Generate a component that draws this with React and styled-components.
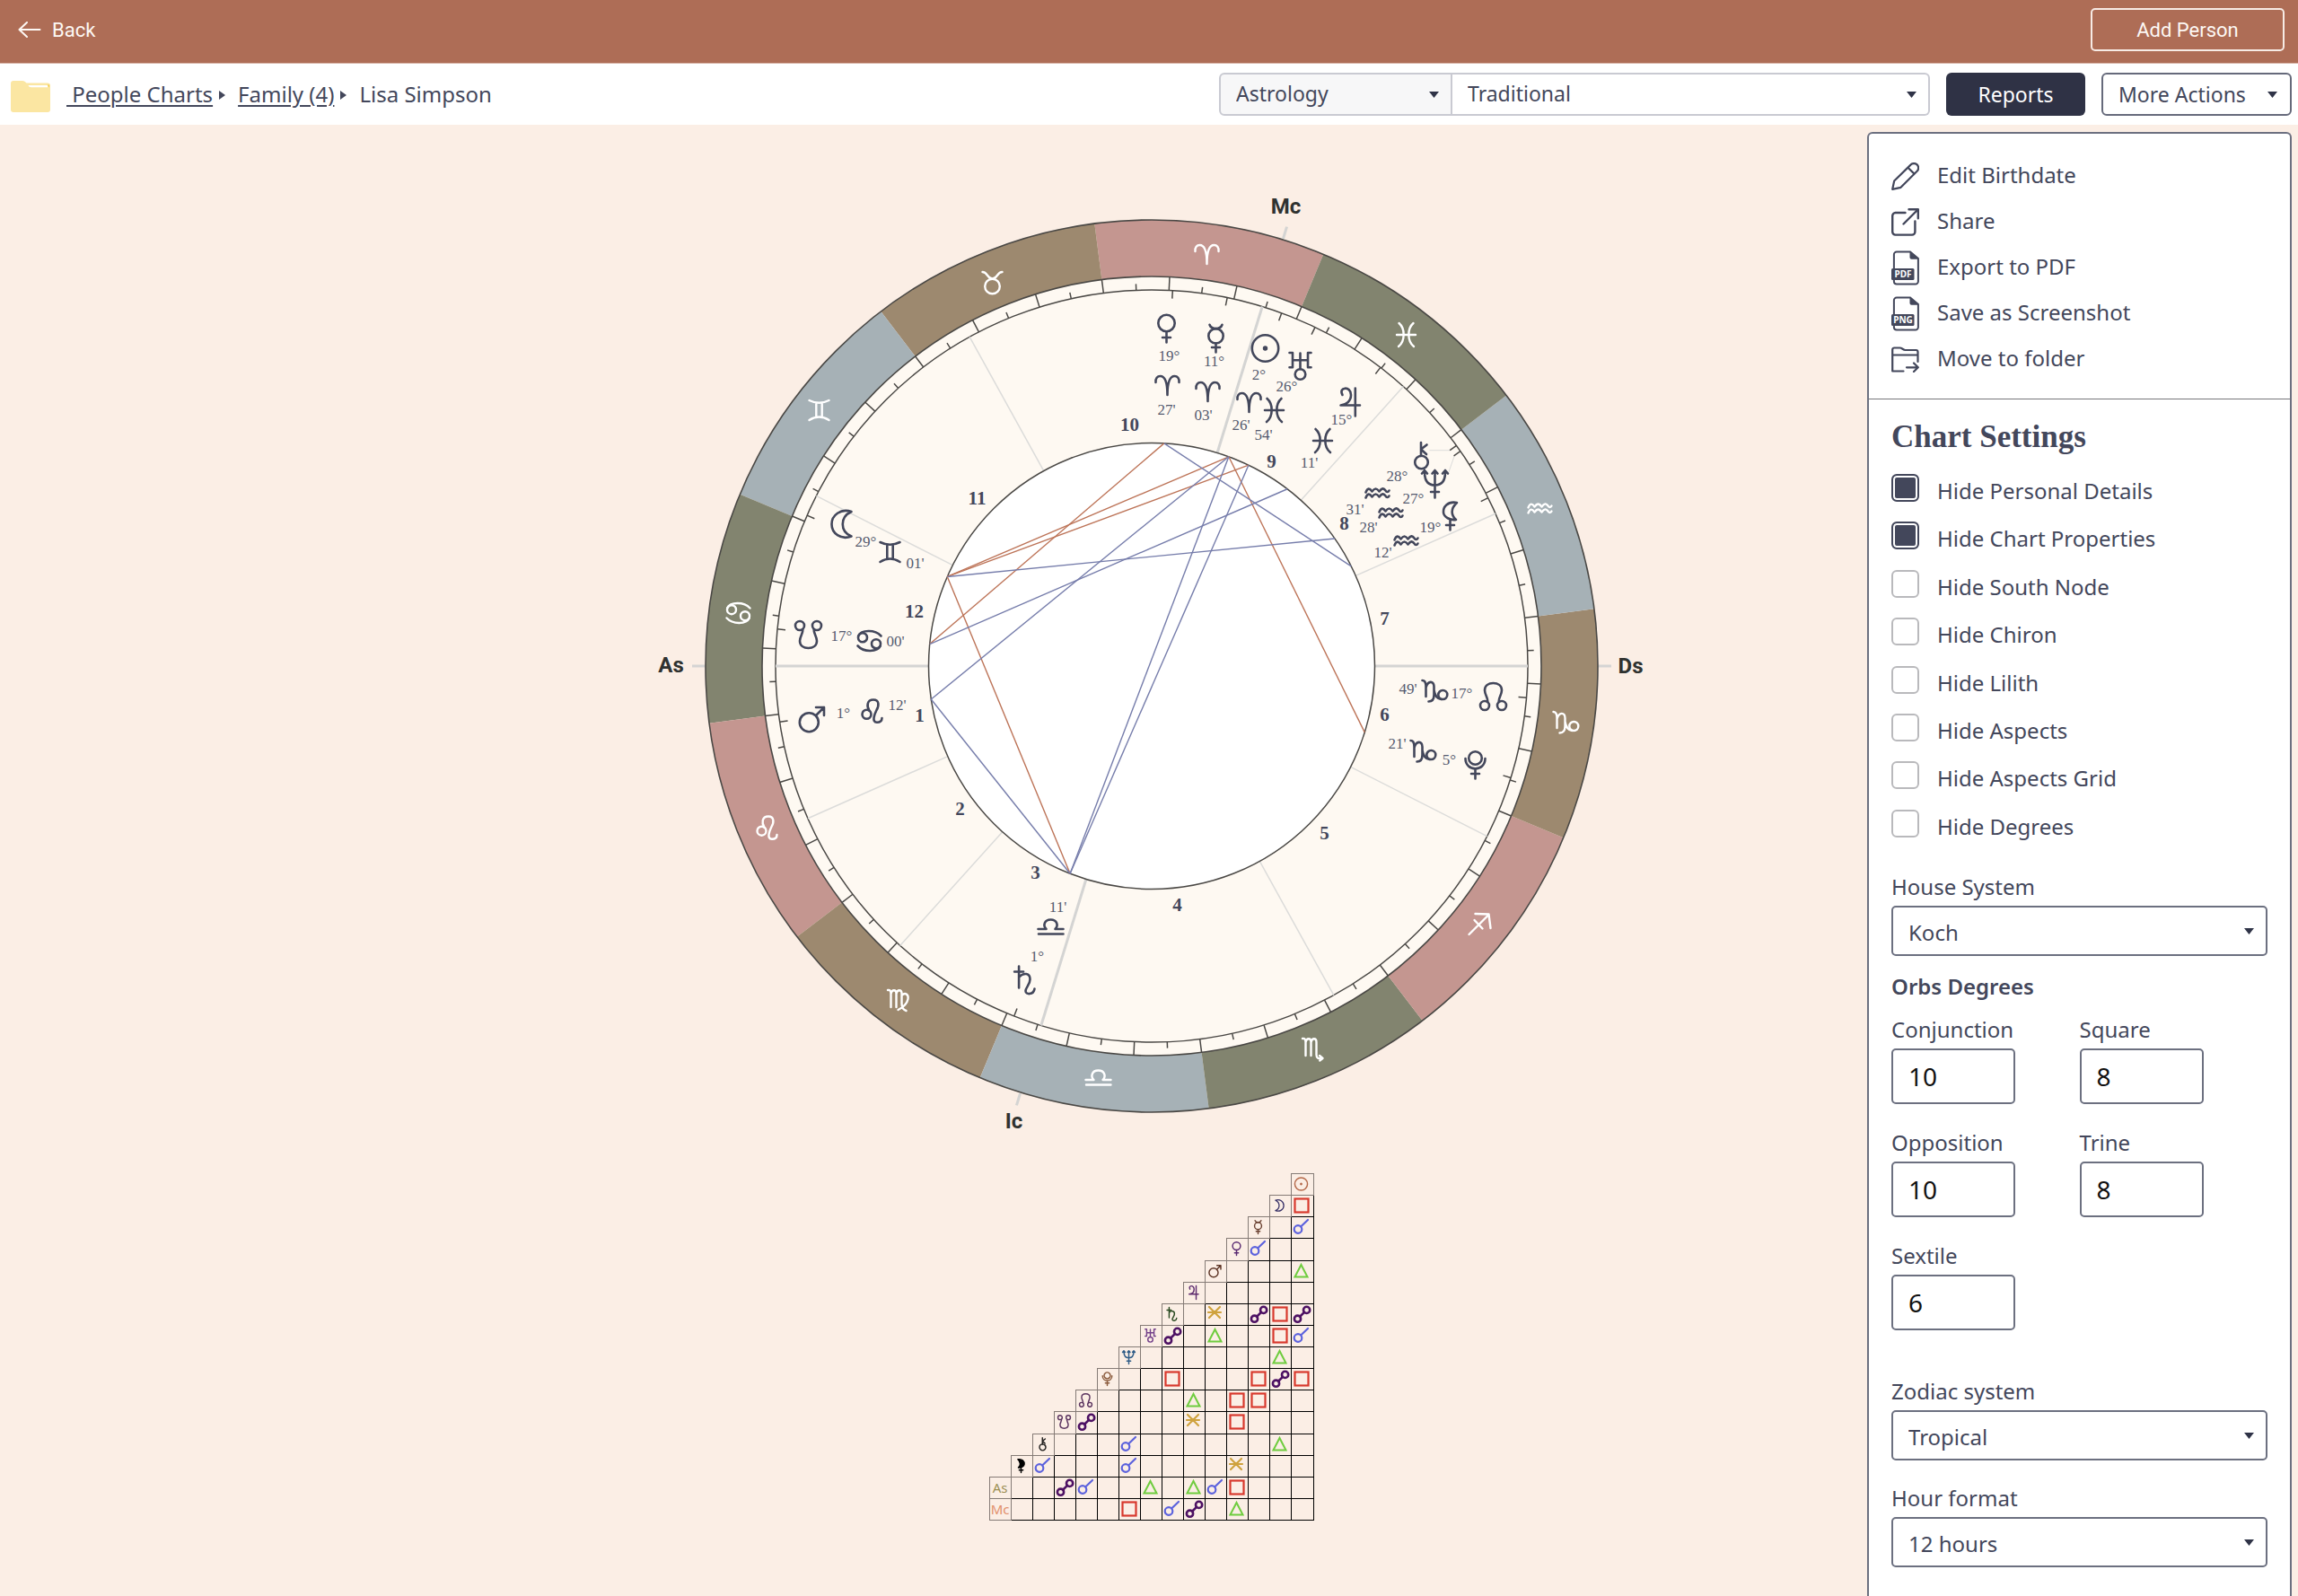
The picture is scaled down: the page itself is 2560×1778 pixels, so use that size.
import React from 'react';
import styled, { createGlobalStyle } from 'styled-components';

const ink = '#43475b';
const sans = '"Noto Sans", "Open Sans", sans-serif';
const serif = '"Liberation Serif", "Times New Roman", serif';

const GlobalStyle = createGlobalStyle`
  *, *::before, *::after { box-sizing: border-box; }
  body {
    margin: 0;
    background: #fbeee5;
    color: ${ink};
    font-family: ${sans};
    font-size: 24px;
  }
`;

const Page = styled.div`
  display: flex;
  flex-direction: column;
  height: 100vh;
  overflow: hidden;
`;

/* ---------- top bar ---------- */

const TopBar = styled.header`
  display: flex;
  flex: none;
  align-items: center;
  justify-content: space-between;
  height: 71px;
  padding: 0 15px 4px 20px;
  background: #ae6d56;
  border-bottom: 1px solid #d9b6a9;
  font-family: Roboto, sans-serif;
  font-size: 22px;
`;

const BackLink = styled.a`
  display: flex;
  align-items: center;
  gap: 12px;
  color: #fdf8f4;
  text-decoration: none;
`;

const AddButton = styled.button`
  width: 216px;
  height: 48px;
  border: 2px solid #f7ebe5;
  border-radius: 5px;
  background: transparent;
  color: #fdf8f4;
  font: inherit;
`;

/* ---------- toolbar ---------- */

const Toolbar = styled.div`
  display: flex;
  flex: none;
  align-items: center;
  justify-content: space-between;
  height: 68px;
  padding: 0 7px 0 12px;
  background: #fff;
`;

const Breadcrumbs = styled.nav`
  display: flex;
  align-items: center;

  svg { flex: none; }
  a, span { padding-bottom: 2px; }
`;

const Crumb = styled.a`
  color: ${ink};
  text-decoration: underline;
  text-decoration-thickness: 2px;
  text-underline-offset: 3px;
  white-space: pre;
`;

const FolderMark = styled.svg`
  margin-top: 4px;
  margin-right: 18px;
`;

const CrumbArrow = styled.svg`
  margin: 2px 14px 0 7px;
`;

const Actions = styled.div`
  display: flex;
  gap: 18px;
  font-size: 23px;
`;

const SelectGroup = styled.div`
  display: flex;
`;

const SelectBox = styled.div`
  display: grid;
  grid-template-columns: minmax(0, 1fr);
  align-items: center;
  width: ${(p) => p.$width || 'auto'};

  > * { grid-area: 1 / 1; }

  svg {
    justify-self: end;
    margin-right: 15px;
    pointer-events: none;
  }
`;

const BarSelect = styled.select`
  appearance: none;
  width: 100%;
  height: 48px;
  padding: 0 40px 2px 17px;
  border: 2px solid #c9cad2;
  border-left-width: ${(p) => (p.$joined ? '0' : '2px')};
  border-radius: ${(p) => (p.$joined ? '0 6px 6px 0' : '6px 0 0 6px')};
  background: ${(p) => (p.$joined ? '#fff' : '#f7f7f8')};
  color: ${ink};
  font: inherit;
`;

const ReportsButton = styled.button`
  width: 155px;
  height: 48px;
  border: 0;
  border-radius: 6px;
  background: #2f3245;
  color: #fff;
  font: inherit;
`;

const MoreButton = styled.button`
  display: flex;
  align-items: center;
  justify-content: space-between;
  width: 212px;
  height: 48px;
  padding: 0 14px 0 17px;
  border: 2px solid #666a7b;
  border-radius: 6px;
  background: #fff;
  color: ${ink};
  font: inherit;
`;

/* ---------- body ---------- */

const Body = styled.main`
  display: flex;
  flex: 1;
  min-height: 0;
  padding: 8px 7px 0 485px;
`;

const ChartColumn = styled.section`
  display: flex;
  flex: 1;
  flex-direction: column;
  align-items: center;
  gap: 25px;
  min-width: 0;
  padding-top: 55px;
`;

const Wheel = styled.svg`
  flex: none;
  width: 1120px;
  max-width: 100%;
`;

const AspectTable = styled.table`
  flex: none;
  width: 362px;
  height: 387px;
  border-collapse: collapse;
  table-layout: fixed;

  th, td { padding: 0; overflow: hidden; }
  svg { display: block; overflow: visible; }
`;

const BodyHead = styled.th`
  border: 1px solid #857b76;
  color: ${(p) => p.$color};
  font-size: 15px;
  font-weight: 400;
  line-height: 22px;
`;

const AspectCell = styled.td`
  border: 1px solid #000;
`;

/* ---------- side panel ---------- */

const Panel = styled.aside`
  flex: none;
  width: 473px;
  border: 2px solid #6c7080;
  border-bottom: 0;
  border-radius: 6px 6px 0 0;
  background: #fff;
  overflow: hidden;
`;

const ActionList = styled.ul`
  margin: 0;
  padding: 22px 25px 18px;
  border-bottom: 1px solid #77777b;
  list-style: none;
`;

const ActionLink = styled.a`
  display: grid;
  grid-template-columns: 31px 1fr;
  align-items: center;
  gap: 20px;
  height: 51px;
  color: ${ink};
  text-decoration: none;

  span { padding-bottom: 5px; }
`;

const Settings = styled.form`
  padding: 21px 25px;
`;

const PanelTitle = styled.h2`
  margin: 0 0 20px;
  font-family: ${serif};
  font-size: 35px;
  font-weight: 700;
  line-height: 42px;
`;

const CheckList = styled.div`
  display: grid;
  grid-auto-rows: 1fr;
  height: 427px;
`;

const CheckLabel = styled.label`
  display: flex;
  gap: 20px;
  line-height: 38px;
`;

const CheckBox = styled.input`
  appearance: none;
  flex: none;
  width: 31px;
  height: 31px;
  margin: 0;
  border: 2px solid #b9b9bc;
  border-radius: 6px;

  &:checked {
    border-color: ${ink};
    background: ${ink};
    box-shadow: inset 0 0 0 2px #fff;
  }
`;

const Field = styled.div`
  display: flex;
  flex-direction: column;
  margin-top: ${(p) => p.$top || '0'};
`;

const FieldLabel = styled.label`
  padding-bottom: 2px;
  line-height: 38px;
`;

const PanelSelect = styled.select`
  appearance: none;
  width: 100%;
  height: 56px;
  padding: 2px 40px 0 17px;
  border: 2px solid #6c7080;
  border-radius: 5px;
  background: #fff;
  color: ${ink};
  font: inherit;
`;

const OrbFields = styled.fieldset`
  display: grid;
  grid-template-columns: 1fr 1fr;
  row-gap: 24px;
  margin: 0;
  padding: 0;
  border: 0;
`;

const OrbTitle = styled.legend`
  padding: 14px 0 9px;
  font-weight: 600;
  line-height: 40px;
`;

const OrbInput = styled.input`
  width: 138px;
  height: 62px;
  padding: 0 17px;
  border: 2px solid #6c7080;
  border-radius: 5px;
  background: #fff;
  color: #111;
  font: inherit;
  font-size: 28px;
`;

/* ---------- small drawings ---------- */

const Caret = () => (
  <svg width="11" height="7" viewBox="0 0 11 7" aria-hidden="true">
    <path d="M0 0H11L5.5 7Z" fill="#2f3347" />
  </svg>
);

const BackArrow = () => (
  <svg width="26" height="18" viewBox="0 0 26 18" fill="none" stroke="#fdf8f4" strokeWidth="2" strokeLinecap="round" strokeLinejoin="round" aria-hidden="true">
    <path d="M10 1L1.5 9L10 17M1.5 9H24.5" />
  </svg>
);

const YellowFolder = () => (
  <FolderMark width="44" height="35" viewBox="0 0 44 35" aria-hidden="true">
    <path d="M3 0H13C15 0 16 1 17.500 2.500H41A3 3 0 0 1 44 5.500V32A3 3 0 0 1 41 35H3A3 3 0 0 1 0 32V3A3 3 0 0 1 3 0Z" fill="#fbe6a2" />
    <path d="M19.500 5H41V7.200H23C21 7.200 20 6.500 19.500 5Z" fill="#fff" />
    <path d="M40.500 4.500H43V7.500Z" fill="#f3cf57" />
  </FolderMark>
);

const NextArrow = () => (
  <CrumbArrow width="7" height="10" viewBox="0 0 7 10" aria-hidden="true">
    <path d="M0 0L7 5L0 10Z" fill={ink} />
  </CrumbArrow>
);

const lineIcon = { fill: 'none', stroke: ink, strokeWidth: 2.4, strokeLinecap: 'round', strokeLinejoin: 'round', 'aria-hidden': true };

const PencilIcon = () => (
  <svg width="31" height="31" viewBox="0 0 31 31" {...lineIcon} strokeWidth="2.200">
    <path d="M1.200 29.800L3.200 20.500L21.500 2.600A5 5 0 0 1 28.800 9.500L10.500 27.800ZM18.500 5.800L25.500 12.600" />
  </svg>
);

const ShareIcon = () => (
  <svg width="31" height="31" viewBox="0 0 31 31" {...lineIcon}>
    <path d="M15.500 5H4.500A3.400 3.400 0 0 0 1.200 8.400V26.200A3.400 3.400 0 0 0 4.500 29.600H23A3.400 3.400 0 0 0 26.400 26.200V14.500M13.500 17.500L29 2M19.500 1.200H29.800V11.200" />
  </svg>
);

const FileIcon = ({ kind }) => (
  <svg width="31" height="39" viewBox="0 0 31 39" aria-hidden="true">
    <path d="M2.900 20V4.500A3 3 0 0 1 5.900 1.500H21L29.900 9V34.500A3 3 0 0 1 26.900 37.500H5.900A3 3 0 0 1 2.900 34.500V32" fill="none" stroke={ink} strokeWidth="2" />
    <path d="M20.500 1.500L30 9.800H22.500A2 2 0 0 1 20.500 7.800Z" fill={ink} />
    <rect x="0" y="20" width="25.500" height="13" rx="1.500" fill={ink} />
    <text x="13" y="30.200" textAnchor="middle" fill="#fff" fontFamily={sans} fontSize="10" fontWeight="700">{kind}</text>
  </svg>
);

const MoveIcon = () => (
  <svg width="31" height="29" viewBox="0 0 31 29" {...lineIcon} strokeWidth="2.200">
    <path d="M13.500 27.500H1.200V3.500A2 2 0 0 1 3.200 1.500H9.500C12 1.500 13 4 15.500 4H27.500A2 2 0 0 1 29.500 6V17M1.500 9.500H29.500M17 23.300H29.500M25 18.500L29.800 23.300L25 28" />
  </svg>
);

/* Astrological symbols, each drawn around its own centre. */
const GLYPHS = {
  aries: <path d="M-13 -3C-13.500 -7.500 -11 -10 -8 -10C-3 -10 0 -4 0 11C0 -4 3 -10 8 -10C11 -10 13.500 -7.500 13 -3" />,
  taurus: <><circle cy="4" r="8.300" /><path d="M-11 -12C-5 -12 -6 -4.500 0 -4.500C6 -4.500 5 -12 11 -12" /></>,
  gemini: <path d="M-11 -11C-4 -7.500 4 -7.500 11 -11M-11 11C-4 6.500 4 6.500 11 11M-3.200 -8.500V8M3.200 -8.500V8" />,
  cancer: <><circle cx="-7.500" cy="-3.800" r="5" /><circle cx="7.500" cy="3.200" r="5" /><path d="M-12.300 -5.500C-9 -12.500 6 -13 13 -5.500M12.300 5.500C9 12.500 -6 13 -13 5.500" /></>,
  leo: <><circle cx="-6" cy="3.700" r="5" /><path d="M-3.200 -.5C-6 -5 -6 -12.500 1.500 -12.500C8 -12.500 8 -6 5 -1C3 3 -1 12.500 5.500 12.800C9 12.800 11 11 11 8" /></>,
  virgo: <path d="M-11.500 -11C-9 -11.500 -8 -10 -8 -7V8M-8 -7C-7 -12 -2 -12 -2 -7V8M-2 -7C-1 -12 4 -12 4 -7V4C4 8 6 11 9 12M4 -5C8 -9 12 -6 11 -1C10 4 6 8 0 11" />,
  libra: <path d="M-14 2H-5C-9 -2 -7 -8.500 0 -8.500C7 -8.500 9 -2 5 2H14M-13.500 7.500H14" />,
  scorpio: <path d="M-11.500 -11C-9 -11.500 -8 -10 -8 -7V8M-8 -7C-7 -12 -2 -12 -2 -7V8M-2 -7C-1 -12 4 -12 4 -7V7C4 11 6 11.500 10.500 11M7.500 8L11 11L7.800 13.500" />,
  sagittarius: <path d="M-12 12L10 -10M-5 -11L10 -10.500L12 5M-6 -4L3 5.500" />,
  capricorn: <><circle cx="8.800" cy="4" r="5" /><path d="M-14 -12C-11 -12 -10 -9 -10 -5V6M-10 -4C-8 -12 -1 -12 -1 -5V4C-1 9 -3 11.500 -7 11.500M-1 -1C0 5 2 8.500 7 9" /></>,
  aquarius: <path d="M-13 -.5C-11 -5.500 -9 -5.500 -6 -1.500C-3 -5.500 -1 -5.500 2 -1.500C5 -5.500 7 -5.500 9 -2.500C10 -.5 12 -.5 13 -2.500M-13 5.500C-11 .5 -9 .5 -6 4.500C-3 .5 -1 .5 2 4.500C5 .5 7 .5 9 3.500C10 5.500 12 5.500 13 3.500" />,
  pisces: <path d="M-8 -13C-1 -7 -1 7 -8.500 13M8 -13C1 -7 1 7 8.500 13M-10.500 0H10.500" />,
  sun: <><circle r="14.700" /><circle r="1.400" /></>,
  moon: <path d="M11 -14C-1 -18 -11 -10 -11 0C-11 10 -1 18 11 13.500C-2 8 -2 -8 11 -14Z" />,
  mercury: <><circle cy="-2.700" r="8.200" /><path d="M-7 -15.200C-5 -9.500 5 -9.500 7 -15.200M0 5.500V15.500M-4.500 10H4.500" /></>,
  venus: <><circle cy="-6" r="9.200" /><path d="M0 3.200V15.500M-4.500 10H4.500" /></>,
  mars: <><circle cx="-3.200" cy="3.700" r="10.500" /><path d="M4.500 -4L13.500 -13M4.500 -13H13.500V-4" /></>,
  jupiter: <path d="M-8 -8C-13 -17 1.500 -18.500 1.500 -8C1.500 -1 -4 3 -10 3.500H11.500M6.300 -15.500V15.500" />,
  saturn: <path d="M-6.400 -15.500V8.500M-11.400 -9.500H-1.400M-6.400 -3.500C-1 -9 6 -8 6 -1C6 5 1 8 1 12C1 16.500 10 16.500 11 9.500" />,
  uranus: <><circle cy="9" r="5.800" /><path d="M-12 -15H-8.500V1.200H-12M12 -15H8.500V1.200H12M-8.500 -6.800H8.500M0 -14.500V3" /></>,
  neptune: <path d="M-11.500 -13C-11.500 -1 -6 1.500 0 1.500C6 1.500 11.500 -1 11.500 -13M0 -14V15.500M-4.500 9H4.500M-14.500 -11.500L-11.500 -15L-8.500 -11.500M-3 -11.500L0 -15L3 -11.500M8.500 -11.500L11.500 -15L14.500 -11.500" />,
  pluto: <><circle cy="-7.500" r="7.300" /><path d="M-11 -7C-11 8 11 8 11 -7M0 4.500V15.500M-4.500 10H4.500" /></>,
  northNode: <><circle cx="-9.500" cy="10" r="5" /><circle cx="9.500" cy="10" r="5" /><path d="M-6.500 6C-5 3 -9.500 -2 -9.500 -7C-9.500 -12.500 -5 -15 0 -15C5 -15 9.500 -12.500 9.500 -7C9.500 -2 5 3 6.500 6" /></>,
  southNode: <><circle cx="-9.500" cy="-10" r="5" /><circle cx="9.500" cy="-10" r="5" /><path d="M-6.500 -6C-5 -3 -9.500 2 -9.500 7C-9.500 12.500 -5 15 0 15C5 15 9.500 12.500 9.500 7C9.500 2 5 -3 6.500 -6" /></>,
  chiron: <><circle cy="7" r="7.300" /><path d="M-.5 -15V0M6 -12.500L-.5 -7.500L5.500 -2" /></>,
  lilith: <path d="M7.500 -15C-3 -17 -8 -10 -7.500 -4C-7 1 0 5 6.500 4C1 -1 0 -8 7.500 -15ZM0 3.500V15.500M-4.500 10H4.500" />,
};

/* ---------- wheel ---------- */

const CX = 1282.5;
const CY = 742;
const R_OUTER = 497;
const R_SIGN = 434;
const R_TICK = 419;
const R_CORE = 248.5;
const ARIES_ANGLE = 67.36;
const LINE = '#4a4845';

const at = (degrees, radius) => {
  const a = (degrees * Math.PI) / 180;
  return [CX + radius * Math.cos(a), CY - radius * Math.sin(a)];
};
const ofLongitude = (longitude, radius) => at(ARIES_ANGLE + longitude, radius);

const ROSE = '#c49690';
const TAN = '#9d896f';
const SLATE = '#a6b1b6';
const OLIVE = '#82846f';

/* name, band colour, [symbol] */
const SIGNS = [
  ['aries', ROSE, [1344, 283]],
  ['taurus', TAN, [1105, 315]],
  ['gemini', SLATE, [912, 457]],
  ['cancer', OLIVE, [822, 683]],
  ['leo', ROSE, [854, 922]],
  ['virgo', TAN, [1000, 1114]],
  ['libra', SLATE, [1223, 1201]],
  ['scorpio', OLIVE, [1462, 1168]],
  ['sagittarius', ROSE, [1648, 1029]],
  ['capricorn', TAN, [1744, 805]],
  ['aquarius', SLATE, [1715, 566]],
  ['pisces', OLIVE, [1566, 373]],
];

/* body, longitude, [symbol], [degree label], sign, [sign symbol], [minute label] */
const PLACEMENTS = [
  ['venus', 19.45, [1299, 366], '19°', [1302, 396], 'aries', [1300, 429], "27'", [1299, 456]],
  ['mercury', 11.05, [1354, 377], '11°', [1352, 402], 'aries', [1345, 436], "03'", [1340, 462]],
  ['sun', 2.43, [1409, 388], '2°', [1402, 417], 'aries', [1391, 448], "26'", [1382, 473]],
  ['uranus', 356.9, [1448, 408], '26°', [1433, 430], 'pisces', [1419, 457], "54'", [1407, 484]],
  ['jupiter', 345.18, [1503, 448], '15°', [1494, 467], 'pisces', [1473, 491], "11'", [1458, 515]],
  ['chiron', 328.52, [1583, 508], '28°', [1556, 530], 'aquarius', [1534, 549], "31'", [1509, 567]],
  ['neptune', 327.47, [1598, 539], '27°', [1574, 555], 'aquarius', [1549, 571], "28'", [1524, 587]],
  ['lilith', 319.2, [1615, 575], '19°', [1593, 587], 'aquarius', [1566, 602], "12'", [1540, 615]],
  ['moon', 89.02, [937, 584], '29°', [964, 603], 'gemini', [991, 615], "01'", [1019, 627]],
  ['southNode', 107, [900, 707], '17°', [937, 708], 'cancer', [968, 714], "00'", [997, 714]],
  ['mars', 121.2, [904, 801], '1°', [939, 794], 'leo', [971, 792], "12'", [999, 785]],
  ['saturn', 181.18, [1141, 1092], '1°', [1155, 1065], 'libra', [1170, 1033], "11'", [1178, 1010]],
  ['northNode', 287.82, [1663, 776], '17°', [1628, 772], 'capricorn', [1598, 770], "49'", [1568, 767]],
  ['pluto', 275.35, [1643, 852], '5°', [1614, 846], 'capricorn', [1585, 837], "21'", [1556, 828]],
];

const LONGITUDES = Object.fromEntries(PLACEMENTS.map(([name, lon]) => [name, lon]));

const ASPECT_LINES = [
  ['venus', 'southNode', 'hard'], ['sun', 'moon', 'hard'], ['uranus', 'moon', 'hard'],
  ['moon', 'saturn', 'hard'], ['sun', 'pluto', 'hard'],
  ['venus', 'lilith', 'soft'], ['sun', 'mars', 'soft'], ['sun', 'saturn', 'soft'],
  ['uranus', 'saturn', 'soft'], ['jupiter', 'southNode', 'soft'], ['neptune', 'moon', 'soft'],
  ['mars', 'saturn', 'soft'],
];

const MINOR_CUSPS = [48, 23.9, 118.95, 153.1, 203.9, 228, 298.95, 333.1];
const AXES = [72.9, 180, 252.9, 0];
const AXIS_LABELS = [['As', 747, 741], ['Mc', 1432, 230], ['Ds', 1816, 742], ['Ic', 1129, 1249]];

const HOUSES = [
  [1, 1024, 797], [2, 1069, 901], [3, 1153, 972], [4, 1311, 1008], [5, 1475, 928], [6, 1542, 796],
  [7, 1542, 689], [8, 1497, 583], [9, 1416, 514], [10, 1258, 473], [11, 1088, 555], [12, 1018, 681],
];

const Segment = ({ angle, from, to, ...rest }) => {
  const [x1, y1] = at(angle, from);
  const [x2, y2] = at(angle, to);
  return <line x1={x1} y1={y1} x2={x2} y2={y2} {...rest} />;
};

const signPath = (index) => {
  const a = ofLongitude(index * 30, R_OUTER);
  const b = ofLongitude(index * 30 + 30, R_OUTER);
  const c = ofLongitude(index * 30 + 30, R_SIGN);
  const d = ofLongitude(index * 30, R_SIGN);
  return `M${a}A${R_OUTER} ${R_OUTER} 0 0 0 ${b}L${c}A${R_SIGN} ${R_SIGN} 0 0 1 ${d}Z`;
};

const ChartWheel = () => (
  <Wheel viewBox={`${CX - 560} ${CY - 540} 1120 1080`} role="img" aria-label="Birth chart of Lisa Simpson">
    {SIGNS.map(([name, color], i) => <path key={name} d={signPath(i)} fill={color} />)}
    <circle cx={CX} cy={CY} r={R_OUTER} fill="none" stroke={LINE} strokeWidth="1.600" />
    <circle cx={CX} cy={CY} r={R_SIGN} fill="#fef9f2" stroke={LINE} strokeWidth="1.600" />
    <circle cx={CX} cy={CY} r={R_TICK} fill="none" stroke={LINE} strokeWidth="1.500" />
    <g stroke="#dcdcda" strokeWidth="1.500">
      {MINOR_CUSPS.map((a) => <Segment key={a} angle={a} from={R_CORE} to={R_TICK} />)}
      <path d="M1592 501.700H1615M1613 527L1620 507" strokeWidth="1" fill="none" />
    </g>
    <g stroke="#d4d4d3" strokeWidth="3">
      {AXES.map((a) => (
        <g key={a}>
          <Segment angle={a} from={R_CORE} to={R_TICK} />
          <Segment angle={a} from={R_OUTER + 1} to={512} />
        </g>
      ))}
    </g>
    <g stroke={LINE} strokeWidth="1.500">
      {Array.from({ length: 72 }, (_, i) => (
        <Segment key={i} angle={ARIES_ANGLE + i * 5} from={R_TICK} to={i % 2 ? R_TICK + 7 : R_SIGN} />
      ))}
      {PLACEMENTS.map(([name, lon]) => (
        <Segment key={name} angle={ARIES_ANGLE + lon} from={R_TICK} to={R_TICK - 9} />
      ))}
    </g>
    <circle cx={CX} cy={CY} r={R_CORE} fill="#fff" stroke={LINE} strokeWidth="1.500" />
    <g strokeWidth="1.400">
      {ASPECT_LINES.map(([a, b, kind]) => {
        const [x1, y1] = ofLongitude(LONGITUDES[a], R_CORE);
        const [x2, y2] = ofLongitude(LONGITUDES[b], R_CORE);
        return <line key={a + b} x1={x1} y1={y1} x2={x2} y2={y2} stroke={kind === 'hard' ? '#bd7458' : '#767dab'} />;
      })}
    </g>
    <g fill="none" stroke="#fff" strokeWidth="2.400" strokeLinecap="round" strokeLinejoin="round">
      {SIGNS.map(([name, , spot]) => <g key={name} transform={`translate(${spot})`}>{GLYPHS[name]}</g>)}
    </g>
    <g fill="none" stroke={ink} strokeWidth="2.600" strokeLinecap="round" strokeLinejoin="round">
      {PLACEMENTS.map(([name, , spot, , , sign, signSpot]) => (
        <g key={name}>
          <g transform={`translate(${spot})`}>{GLYPHS[name]}</g>
          <g transform={`translate(${signSpot})`}>{GLYPHS[sign]}</g>
        </g>
      ))}
    </g>
    <g fontFamily={serif} fontSize="17" fill="#555b6f" textAnchor="middle">
      {PLACEMENTS.map(([name, , , deg, degSpot, , , min, minSpot]) => (
        <React.Fragment key={name}>
          <text x={degSpot[0]} y={degSpot[1] + 6}>{deg}</text>
          <text x={minSpot[0]} y={minSpot[1] + 6}>{min}</text>
        </React.Fragment>
      ))}
    </g>
    <g fontFamily={serif} fontSize="21" fontWeight="700" fill={ink} textAnchor="middle">
      {HOUSES.map(([n, x, y]) => <text key={n} x={x} y={y + 7}>{n}</text>)}
    </g>
    <g fontFamily="Roboto, sans-serif" fontSize="24" fontWeight="700" fill="#2f3230" textAnchor="middle">
      {AXIS_LABELS.map(([t, x, y]) => <text key={t} x={x} y={y + 8}>{t}</text>)}
    </g>
  </Wheel>
);

/* ---------- aspect grid ---------- */

const COLUMNS = 15;

const GRID_ROWS = [
  ['sun', '#b4694a', {}],
  ['moon', '#362f66', { 14: 'square' }],
  ['mercury', '#6b4232', { 14: 'conjunction' }],
  ['venus', '#5a2a72', { 12: 'conjunction' }],
  ['mars', '#5e3526', { 14: 'trine' }],
  ['jupiter', '#5e2c6e', {}],
  ['saturn', '#27481f', { 10: 'sextile', 12: 'opposition', 13: 'square', 14: 'opposition' }],
  ['uranus', '#74418a', { 8: 'opposition', 10: 'trine', 13: 'square', 14: 'conjunction' }],
  ['neptune', '#2f5c87', { 13: 'trine' }],
  ['pluto', '#8a5a3c', { 8: 'square', 12: 'square', 13: 'opposition', 14: 'square' }],
  ['northNode', '#5c3560', { 9: 'trine', 11: 'square', 12: 'square' }],
  ['southNode', '#5c3560', { 4: 'opposition', 9: 'sextile', 11: 'square' }],
  ['chiron', '#22201f', { 6: 'conjunction', 13: 'trine' }],
  ['lilith', '#000000', { 2: 'conjunction', 6: 'conjunction', 11: 'sextile' }],
  ['As', '#9d9055', { 3: 'opposition', 4: 'conjunction', 7: 'trine', 9: 'trine', 10: 'conjunction', 11: 'square' }],
  ['Mc', '#e2906c', { 6: 'square', 8: 'conjunction', 9: 'opposition', 11: 'trine' }],
];

const ASPECT_MARKS = {
  square: <rect x="3.500" y="3.500" width="15" height="15" stroke="#d8392d" strokeWidth="2.200" />,
  trine: <path d="M10.500 4L17.500 17.500H3.500Z" stroke="#6fcc3f" strokeWidth="2" />,
  conjunction: <g stroke="#5c62dd" strokeWidth="2.200"><circle cx="7" cy="13.500" r="4.300" /><path d="M10.100 10.500L18 3" /></g>,
  opposition: <g stroke="#4d1163" strokeWidth="2.600"><circle cx="6.500" cy="16.200" r="3.600" /><circle cx="16.600" cy="6.400" r="3.600" /><path d="M9.100 13.700L14 8.900" /></g>,
  sextile: <path d="M3 9H17M4 3L16 15M16 3L4 15" stroke="#cfa23e" strokeWidth="2.200" />,
};

const BodyGlyph = ({ name, color }) => {
  const mirrored = name === 'moon' || name === 'lilith';
  const size = name === 'moon' ? 0.42 : 0.48;
  return (
    <svg width="23" height="23" viewBox="0 0 23 23" fill={name === 'lilith' ? color : 'none'} stroke={color} strokeLinecap="round" strokeLinejoin="round" strokeWidth="3" aria-label={name}>
      <g transform={`translate(10.500 11) scale(${mirrored ? -size : size} ${size})`}>{GLYPHS[name]}</g>
    </svg>
  );
};

const AspectGrid = () => (
  <AspectTable aria-label="Aspects grid">
    <colgroup>{Array.from({ length: COLUMNS }, (_, i) => <col key={i} />)}</colgroup>
    <tbody>
      {GRID_ROWS.map(([name, color, aspects], row) => {
        const start = Math.max(0, COLUMNS - 1 - row);
        return (
          <tr key={name}>
            {start > 0 && <td colSpan={start} />}
            <BodyHead scope="row" $color={color}>
              {GLYPHS[name] ? <BodyGlyph name={name} color={color} /> : name}
            </BodyHead>
            {Array.from({ length: COLUMNS - 1 - start }, (_, i) => {
              const aspect = aspects[start + 1 + i];
              return (
                <AspectCell key={i}>
                  {aspect && (
                    <svg width="23" height="23" viewBox="0 0 23 23" fill="none" strokeLinecap="round" aria-label={aspect}>
                      {ASPECT_MARKS[aspect]}
                    </svg>
                  )}
                </AspectCell>
              );
            })}
          </tr>
        );
      })}
    </tbody>
  </AspectTable>
);

/* ---------- panel ---------- */

const PANEL_ACTIONS = [
  ['Edit Birthdate', <PencilIcon />],
  ['Share', <ShareIcon />],
  ['Export to PDF', <FileIcon kind="PDF" />],
  ['Save as Screenshot', <FileIcon kind="PNG" />],
  ['Move to folder', <MoveIcon />],
];

const TOGGLES = [
  ['Hide Personal Details', true],
  ['Hide Chart Properties', true],
  ['Hide South Node', false],
  ['Hide Chiron', false],
  ['Hide Lilith', false],
  ['Hide Aspects', false],
  ['Hide Aspects Grid', false],
  ['Hide Degrees', false],
];

const ORBS = [['Conjunction', 10], ['Square', 8], ['Opposition', 10], ['Trine', 8], ['Sextile', 6]];

const SelectField = ({ id, label, value, top }) => (
  <Field $top={top}>
    <FieldLabel htmlFor={id}>{label}</FieldLabel>
    <SelectBox>
      <PanelSelect id={id} defaultValue={value}>
        <option>{value}</option>
      </PanelSelect>
      <Caret />
    </SelectBox>
  </Field>
);

const SidePanel = () => (
  <Panel>
    <ActionList>
      {PANEL_ACTIONS.map(([label, icon]) => (
        <li key={label}>
          <ActionLink href="#">{icon}<span>{label}</span></ActionLink>
        </li>
      ))}
    </ActionList>
    <Settings>
      <PanelTitle>Chart Settings</PanelTitle>
      <CheckList>
        {TOGGLES.map(([label, on]) => (
          <CheckLabel key={label}>
            <CheckBox type="checkbox" defaultChecked={on} />
            {label}
          </CheckLabel>
        ))}
      </CheckList>
      <SelectField id="house" label="House System" value="Koch" top="14px" />
      <OrbFields>
        <OrbTitle>Orbs Degrees</OrbTitle>
        {ORBS.map(([label, value]) => (
          <Field key={label}>
            <FieldLabel htmlFor={label}>{label}</FieldLabel>
            <OrbInput id={label} type="text" inputMode="numeric" defaultValue={value} />
          </Field>
        ))}
      </OrbFields>
      <SelectField id="zodiac" label="Zodiac system" value="Tropical" top="49px" />
      <SelectField id="hours" label="Hour format" value="12 hours" top="23px" />
    </Settings>
  </Panel>
);

export default function App() {
  return (
    <Page>
      <GlobalStyle />
      <TopBar>
        <BackLink href="#"><BackArrow />Back</BackLink>
        <AddButton type="button">Add Person</AddButton>
      </TopBar>
      <Toolbar>
        <Breadcrumbs aria-label="Breadcrumb">
          <YellowFolder />
          <Crumb href="#">{'\u00a0People Charts'}</Crumb>
          <NextArrow />
          <Crumb href="#">Family (4)</Crumb>
          <NextArrow />
          <span>Lisa Simpson</span>
        </Breadcrumbs>
        <Actions>
          <SelectGroup>
            <SelectBox $width="260px">
              <BarSelect aria-label="Chart system" defaultValue="Astrology"><option>Astrology</option></BarSelect>
              <Caret />
            </SelectBox>
            <SelectBox $width="532px">
              <BarSelect $joined aria-label="Chart style" defaultValue="Traditional"><option>Traditional</option></BarSelect>
              <Caret />
            </SelectBox>
          </SelectGroup>
          <ReportsButton type="button">Reports</ReportsButton>
          <MoreButton type="button">More Actions<Caret /></MoreButton>
        </Actions>
      </Toolbar>
      <Body>
        <ChartColumn>
          <ChartWheel />
          <AspectGrid />
        </ChartColumn>
        <SidePanel />
      </Body>
    </Page>
  );
}
